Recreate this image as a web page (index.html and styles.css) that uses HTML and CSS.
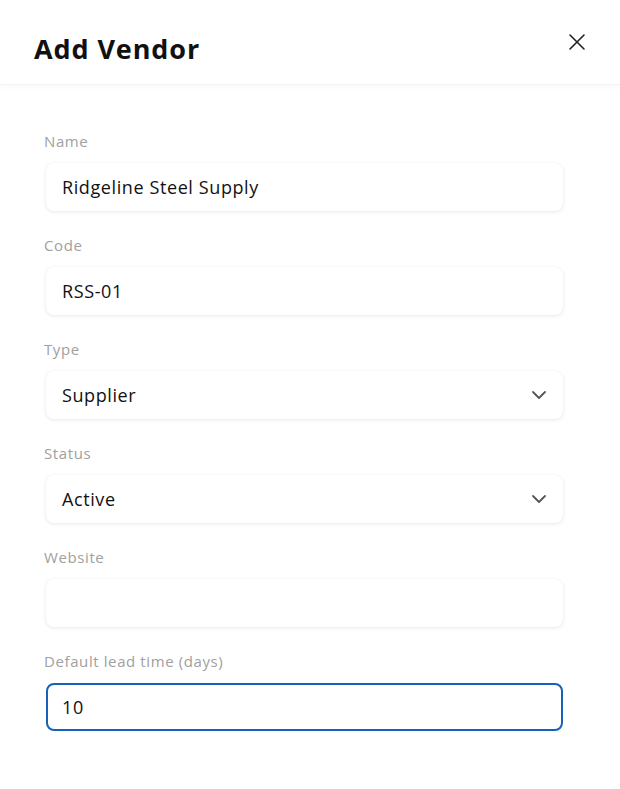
FILE: index.html
```html
<!DOCTYPE html>
<html lang="en">
<head>
<meta charset="utf-8">
<title>Add Vendor</title>
<link rel="stylesheet" href="styles.css">
</head>
<body>
<div class="modal">
  <header class="modal-header">
    <h1 class="modal-title">Add Vendor</h1>
    <button class="close-btn" aria-label="Close">
      <svg width="18" height="18" viewBox="0 0 18 18"><path d="M2 2 L16 16 M16 2 L2 16" stroke="#222" stroke-width="1.6" fill="none" stroke-linecap="round"/></svg>
    </button>
  </header>
  <form class="modal-body">
    <div class="field">
      <label class="field-label">Name</label>
      <div class="input">Ridgeline Steel Supply</div>
    </div>
    <div class="field">
      <label class="field-label">Code</label>
      <div class="input">RSS-01</div>
    </div>
    <div class="field">
      <label class="field-label">Type</label>
      <div class="input select"><span>Supplier</span>
        <svg class="chev" width="16" height="10" viewBox="0 0 16 10"><path d="M2 2 L8 8 L14 2" stroke="#555" stroke-width="1.8" fill="none" stroke-linecap="round" stroke-linejoin="round"/></svg>
      </div>
    </div>
    <div class="field">
      <label class="field-label">Status</label>
      <div class="input select"><span>Active</span>
        <svg class="chev" width="16" height="10" viewBox="0 0 16 10"><path d="M2 2 L8 8 L14 2" stroke="#555" stroke-width="1.8" fill="none" stroke-linecap="round" stroke-linejoin="round"/></svg>
      </div>
    </div>
    <div class="field">
      <label class="field-label">Website</label>
      <div class="input"></div>
    </div>
    <div class="field">
      <label class="field-label">Default lead time (days)</label>
      <div class="input focused">10</div>
    </div>
  </form>
</div>
</body>
</html>
```
FILE: styles.css
```css
* { box-sizing: border-box; }
html, body { margin: 0; padding: 0; background: #fff; }
body { font-family: "Open Sans", Lato, sans-serif; color: #111; }
.modal { width: 620px; }
.modal-header {
  height: 85px;
  display: flex;
  align-items: center;
  justify-content: space-between;
  padding: 0 34px 0 34px;
  border-bottom: 1px solid #f3f3f3;
  box-shadow: 0 3px 6px rgba(0,0,0,0.025);
}
.modal-title {
  margin: 0;
  font-size: 27px;
  font-weight: 700;
  color: #111;
  letter-spacing: 0.9px;
  padding-top: 12px;
}
.close-btn {
  background: none;
  border: none;
  padding: 0;
  margin-top: -1px;
  margin-right: 0;
  width: 18px; height: 18px;
  display: flex;
}
.modal-body {
  padding: 46px 57px 0 44px;
  display: flex;
  flex-direction: column;
}
.field { display: flex; flex-direction: column; margin-bottom: 24px; }
.field-label {
  font-size: 15px;
  line-height: 20px;
  color: #a0a0a0;
  letter-spacing: 0.6px;
  margin-bottom: 12px;
}
.input {
  margin-left: 2px;
  height: 48px;
  border-radius: 8px;
  background: #fff;
  box-shadow: 0 1px 4px rgba(0,0,0,0.09), 0 0 1px rgba(0,0,0,0.06);
  padding: 0 16px;
  display: flex;
  align-items: center;
  font-size: 18px;
  letter-spacing: 0.6px;
  color: #111;
}
.select { justify-content: space-between; padding-right: 16px; }
.chev { display: block; }
.focused {
  border: 2px solid #1662b8;
  box-shadow: none;
  padding-left: 14px;
}
```
